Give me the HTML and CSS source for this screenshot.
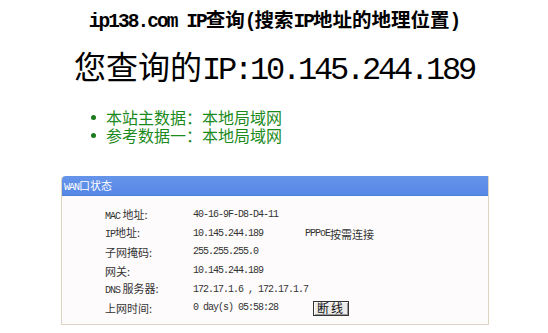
FILE: index.html
```html
<!DOCTYPE html>
<html lang="zh-CN">
<head>
  <meta charset="UTF-8" />
  <title>ip138.com IP查询</title>
  <link rel="stylesheet" href="styles.css">
</head>
<body>

<h1 class="site-title"><span class="latin">ip138.com IP</span>查询<span class="latin">(</span>搜索<span class="latin">IP</span>地址的地理位置<span class="latin">)</span></h1>

<h2 class="your-ip">您查询的<span class="latin">IP:10.145.244.189</span></h2>

<ul class="sources">
  <li>本站主数据：本地局域网</li>
  <li>参考数据一：本地局域网</li>
</ul>

<div class="wan-panel">
  <div class="wan-head"><span class="mono">WAN</span>口状态</div>
  <div class="wan-body">
    <div class="row">
      <span class="label"><span class="mono">MAC</span> 地址:</span>
      <span class="mono">40-16-9F-D8-D4-11</span>
    </div>
    <div class="row">
      <span class="label"><span class="mono">IP</span>地址:</span>
      <span class="mono">10.145.244.189</span>
      <span class="extra"><span class="mono">PPPoE</span>按需连接</span>
    </div>
    <div class="row">
      <span class="label">子网掩码:</span>
      <span class="mono">255.255.255.0</span>
    </div>
    <div class="row">
      <span class="label">网关:</span>
      <span class="mono">10.145.244.189</span>
    </div>
    <div class="row">
      <span class="label"><span class="mono">DNS</span> 服务器:</span>
      <span class="mono">172.17.1.6 , 172.17.1.7</span>
    </div>
    <div class="row">
      <span class="label">上网时间:</span>
      <span class="mono">0 day(s) 05:58:28</span>
      <span class="extra"><button class="disconnect">断线</button></span>
    </div>
  </div>
</div>

</body>
</html>
```

FILE: styles.css
```css
body {
  margin: 0;
  background: #fff;
  color: #000;
  font-family: "Noto Sans CJK SC", sans-serif;
}

.latin {
  font-family: "Liberation Mono", monospace;
}

.site-title {
  margin: 0;
  padding-top: 7px;
  height: 24px;
  text-align: center;
  font-size: 19.5px;
  line-height: 24px;
  font-weight: bold;
}

.site-title .latin {
  letter-spacing: -1.95px;
}

.your-ip {
  margin: 16px 0 0 0;
  height: 40px;
  text-align: center;
  font-size: 32px;
  line-height: 36px;
  font-weight: normal;
}

.your-ip .latin {
  letter-spacing: -3.2px;
}

.sources {
  list-style: none;
  margin: 22px 0 0 0;
  padding: 0 0 0 91px;
  color: #1d8a1d;
  font-size: 16px;
  line-height: 17px;
}

.sources li {
  display: flex;
  align-items: center;
  gap: 10px;
  height: 17.5px;
}

.sources li::before {
  content: "";
  width: 5px;
  height: 5px;
  border-radius: 50%;
  background: #1d7a1d;
}

.wan-panel {
  margin: 32px 0 0 61px;
  width: 426px;
  border: 1px solid #ddd5c2;
  border-top: none;
  border-radius: 4px 0 0 0;
  background: #fefbfc;
  color: #333;
  font-size: 11px;
}

.wan-head {
  height: 19px;
  line-height: 19px;
  padding-left: 2px;
  background: linear-gradient(#6594ea, #5587e6);
  border-bottom: 1px solid #4d7fd8;
  border-radius: 4px 0 0 0;
  color: #fff;
}

.mono {
  font-family: "Liberation Mono", monospace;
  font-size: 10px;
  letter-spacing: -1px;
  white-space: nowrap;
}

.wan-body {
  padding: 10px 0 6px 43px;
}

.row {
  display: grid;
  grid-template-columns: 88px 112px auto;
  align-items: center;
  height: 18.6px;
  line-height: 14px;
  white-space: nowrap;
}

.extra {
  display: flex;
  align-items: center;
}

.disconnect {
  margin-left: 8px;
  padding: 0 3px;
  height: 15px;
  border: 1px solid #333;
  box-shadow: inset 1px 1px 0 #fff, inset -1px -1px 0 #999;
  background: #ecebea;
  color: #111;
  font-family: "Noto Sans CJK SC", sans-serif;
  font-size: 12px;
  line-height: 12px;
  letter-spacing: 2px;
}
```
